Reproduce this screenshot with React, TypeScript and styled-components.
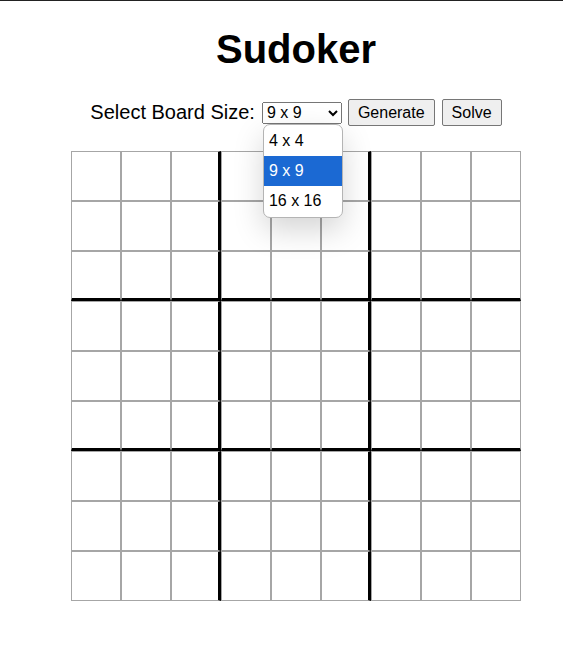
import React, { useState } from 'react';
import styled, { createGlobalStyle } from 'styled-components';

const GlobalStyle = createGlobalStyle`
  html, body {
    margin: 0;
    padding: 0;
    background: #fff;
    overflow: hidden;
  }
  body {
    font-family: "Liberation Sans", Arial, sans-serif;
    font-size: 20px;
    color: #000;
  }
`;

const Page = styled.div`
  border-top: 1px solid #222;
  padding-left: 29px;
  text-align: center;
`;

const Title = styled.h1`
  margin: 25px 0 27px;
  font-size: 40px;
  line-height: 46px;
  font-weight: 700;
`;

const Controls = styled.div`
  display: flex;
  justify-content: center;
  align-items: center;
  gap: 7px;
  height: 27px;
  margin-bottom: 25px;
`;

const Label = styled.label`
  font-size: 20px;
  line-height: 23px;
`;

const SelectWrap = styled.span`
  position: relative;
  display: inline-flex;
`;

const Select = styled.select`
  font-family: "Liberation Sans", Arial, sans-serif;
  font-size: 16px;
  width: 80px;
  height: 22px;
  margin: 0 -1px 0 0;
`;

const Popup = styled.ul`
  position: absolute;
  top: 22px;
  left: 1px;
  width: 78px;
  margin: 0;
  padding: 1px 0;
  list-style: none;
  background: #fff;
  border: 1px solid #b4b4b4;
  border-radius: 7px;
  box-shadow: 0 12px 30px rgba(0, 0, 0, 0.17);
  z-index: 10;
  text-align: left;
`;

const Option = styled.li<{ $active?: boolean }>`
  height: 30px;
  line-height: 30px;
  padding-left: 5px;
  font-size: 16px;
  background: ${(p) => (p.$active ? '#1b69d3' : 'transparent')};
  color: ${(p) => (p.$active ? '#fff' : '#000')};
`;

const Button = styled.button`
  font-family: "Liberation Sans", Arial, sans-serif;
  font-size: 16px;
  line-height: 19px;
  height: 27px;
  padding: 3px 9px;
  margin: 0;
  background: #efefef;
  border: 1px solid #767676;
  border-radius: 2px;
  color: #000;
`;

const Board = styled.div`
  display: grid;
  grid-template-columns: repeat(9, 50px);
  grid-auto-rows: 50px;
  width: 450px;
  margin: 0 auto;
`;

const Cell = styled.div<{ $right: boolean; $bottom: boolean }>`
  box-sizing: border-box;
  border: 1px solid #a6a6a6;
  border-right: ${(p) => (p.$right ? '3px solid #000' : '1px solid #a6a6a6')};
  border-bottom: ${(p) => (p.$bottom ? '3px solid #000' : '1px solid #a6a6a6')};
  background: #fff;
`;

const sizes = ['4 x 4', '9 x 9', '16 x 16'];

export default function App() {
  const [size, setSize] = useState('9 x 9');
  const n = 9;
  const cells = [];
  for (let r = 0; r < n; r++) {
    for (let c = 0; c < n; c++) {
      cells.push(
        <Cell
          key={`${r}-${c}`}
          $right={c % 3 === 2 && c !== n - 1}
          $bottom={r % 3 === 2 && r !== n - 1}
        />
      );
    }
  }

  return (
    <Page>
      <GlobalStyle />
      <Title>Sudoker</Title>
      <Controls>
        <Label htmlFor="size">Select Board Size:</Label>
        <SelectWrap>
          <Select id="size" value={size} onChange={(e) => setSize(e.target.value)}>
            {sizes.map((s) => (
              <option key={s} value={s}>
                {s}
              </option>
            ))}
          </Select>
          <Popup>
            {sizes.map((s) => (
              <Option key={s} $active={s === size}>
                {s}
              </Option>
            ))}
          </Popup>
        </SelectWrap>
        <Button>Generate</Button>
        <Button>Solve</Button>
      </Controls>
      <Board>{cells}</Board>
    </Page>
  );
}
